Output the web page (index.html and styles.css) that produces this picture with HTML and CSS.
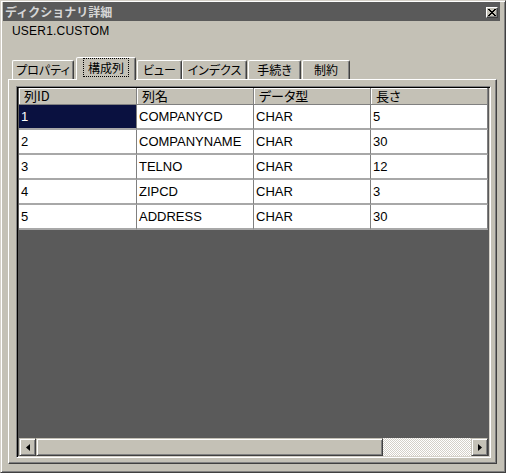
FILE: index.html
```html
<!DOCTYPE html>
<html lang="ja">
<head>
<meta charset="utf-8">
<link rel="stylesheet" href="styles.css">
</head>
<body>
<div class="window">
  <div class="titlebar">
    <span class="title">ディクショナリ詳細</span>
    <span class="close"><svg width="8" height="7" viewBox="0 0 8 7"><path d="M0 0h2v1h1v1h2V1h1V0h2v1H7v1H6v1H5v1h1v1h1v1h1v1H6V6H5V5H3v1H2v1H0V6h1V5h1V4h1V3H2V2H1V1H0z" fill="#000"/></svg></span>
  </div>
  <div class="body">
    <div class="objname">USER1.CUSTOM</div>
    <div class="tabs">
      <div class="tab">プロパティ</div>
      <div class="tab active"><span class="focus">構成列</span></div>
      <div class="tab">ビュー</div>
      <div class="tab">インデクス</div>
      <div class="tab">手続き</div>
      <div class="tab">制約</div>
    </div>
    <div class="panel">
      <div class="grid">
        <div class="rows">
          <div class="row head">
            <div class="cell">列ID</div>
            <div class="cell">列名</div>
            <div class="cell">データ型</div>
            <div class="cell">長さ</div>
          </div>
          <div class="row">
            <div class="cell sel">1</div>
            <div class="cell">COMPANYCD</div>
            <div class="cell">CHAR</div>
            <div class="cell">5</div>
          </div>
          <div class="row">
            <div class="cell">2</div>
            <div class="cell">COMPANYNAME</div>
            <div class="cell">CHAR</div>
            <div class="cell">30</div>
          </div>
          <div class="row">
            <div class="cell">3</div>
            <div class="cell">TELNO</div>
            <div class="cell">CHAR</div>
            <div class="cell">12</div>
          </div>
          <div class="row">
            <div class="cell">4</div>
            <div class="cell">ZIPCD</div>
            <div class="cell">CHAR</div>
            <div class="cell">3</div>
          </div>
          <div class="row">
            <div class="cell">5</div>
            <div class="cell">ADDRESS</div>
            <div class="cell">CHAR</div>
            <div class="cell">30</div>
          </div>
        </div>
        <div class="empty"></div>
        <div class="hscroll">
          <div class="arrow"><svg width="4" height="7" viewBox="0 0 4 7"><path d="M4 0v7L0 3.5z" fill="#000"/></svg></div>
          <div class="thumb"></div>
          <div class="track"></div>
          <div class="arrow"><svg width="4" height="7" viewBox="0 0 4 7"><path d="M0 0v7l4-3.5z" fill="#000"/></svg></div>
        </div>
      </div>
    </div>
  </div>
</div>
</body>
</html>
```
FILE: styles.css
```css
* { box-sizing: border-box; }
html, body { margin: 0; padding: 0; }
body {
  width: 506px;
  height: 473px;
  background: #c4c1b6;
  font-family: "Liberation Sans", "Noto Sans CJK JP", sans-serif;
  font-size: 12px;
  color: #000;
}
.window {
  width: 506px;
  height: 473px;
  border: 1px solid;
  border-color: #d4d0c8 #404040 #404040 #d4d0c8;
  box-shadow: inset 1px 1px 0 #fff, inset -1px -1px 0 #808080;
  padding: 1px 5px 2px 2px;
  display: flex;
  flex-direction: column;
  background: #c4c1b6;
}
.titlebar {
  height: 19px;
  background: #5a5a5a;
  display: flex;
  align-items: center;
  justify-content: space-between;
  padding: 1px 2px 0 2px;
  flex: none;
}
.title {
  color: #d6d6d6;
  font-family: "Noto Sans CJK JP", sans-serif;
  font-size: 12px;
  font-weight: bold;
  line-height: 14px;
}
.close {
  width: 12px;
  height: 11px;
  background: #c4c1b6;
  border: 1px solid;
  border-color: #fff #404040 #404040 #fff;
  box-shadow: inset -1px -1px 0 #808080;
  display: flex;
  align-items: center;
  justify-content: center;
}
.body {
  flex: 1;
  display: flex;
  flex-direction: column;
  padding: 2px 3px 6px 5px;
}
.objname {
  height: 16px;
  line-height: 16px;
  padding-left: 4px;
  font-size: 12px;
  letter-spacing: 0.2px;
}
.tabs {
  display: flex;
  margin-top: 18px;
  padding-left: 4px;
  height: 22px;
  align-items: flex-end;
  position: relative;
  z-index: 1;
}
.tab {
  height: 19px;
  border: 1px solid;
  border-bottom: none;
  border-color: #fff #404040 transparent #fff;
  box-shadow: inset -1px 0 0 #808080;
  border-radius: 2px 2px 0 0;
  font-family: "Noto Sans CJK JP", sans-serif;
  font-feature-settings: "palt";
  font-size: 12px;
  line-height: 17px;
  text-align: center;
  white-space: nowrap;
}
.tab:nth-child(1) { width: 62px; margin-right: 2px; }
.tab:nth-child(2) { width: 60px; margin-right: 1px; }
.tab:nth-child(3) { width: 45px; margin-right: 0; }
.tab:nth-child(4) { width: 65px; margin-right: 1px; }
.tab:nth-child(5) { width: 53px; margin-right: 1px; }
.tab:nth-child(6) { width: 48px; }
.tab.active {
  height: 23px;
  margin-bottom: -1px;
  background: #c4c1b6;
  line-height: 20px;
}
.focus {
  outline: 1px dotted #000;
  outline-offset: 0;
  padding: 0 4px;
}
.panel {
  flex: 1;
  border: 1px solid;
  border-color: #fff #404040 #404040 #fff;
  box-shadow: inset -1px -1px 0 #808080;
  padding: 6px 6px 5px 7px;
  display: flex;
}
.grid {
  flex: 1;
  border: 1px solid;
  border-color: #808080 #fff #fff #808080;
  box-shadow: inset 1px 1px 0 #000, inset -1px -1px 0 #d4d0c8;
  padding: 1px 2px 1px 2px;
  display: flex;
  flex-direction: column;
  background: #5a5a5a;
}
.rows { display: flex; flex-direction: column; flex: none; }
.row {
  display: grid;
  grid-template-columns: 118px 117px 117px 117px;
  height: 25px;
  background: #fff;
  font-size: 13px;
}
.row.head {
  height: 17px;
  background: #c4c1b6;
}
.cell {
  border-right: 1px solid #808080;
  border-bottom: 2px solid #a8a8a8;
  padding: 0 2px;
  line-height: 23px;
  white-space: nowrap;
  overflow: hidden;
}
.row.head .cell {
  border-right: 1px solid #808080;
  box-shadow: inset 1px 1px 0 #fff;
  border-bottom: 1px solid #808080;
  font-family: "Noto Sans CJK JP", sans-serif;
  font-feature-settings: "palt";
  line-height: 16px;
  overflow: visible;
  padding-left: 5px;
}
.cell.sel { background: #0a1140; color: #fff; }
.empty { flex: 1; }
.hscroll {
  height: 18px;
  display: flex;
  flex: none;
}
.arrow {
  width: 17px;
  height: 18px;
  background: #c4c1b6;
  border: 1px solid;
  border-color: #c4c1b6 #404040 #404040 #c4c1b6;
  box-shadow: inset 1px 1px 0 #fff, inset -1px -1px 0 #808080;
  display: flex;
  align-items: center;
  justify-content: center;
}
.thumb {
  width: 347px;
  background: #c4c1b6;
  border: 1px solid;
  border-color: #c4c1b6 #404040 #404040 #c4c1b6;
  box-shadow: inset 1px 1px 0 #fff, inset -1px -1px 0 #808080;
}
.track {
  flex: 1;
  background-color: #fff;
  background-image: repeating-conic-gradient(#d4d0c8 0 25%, #fff 0 50%);
  background-size: 2px 2px;
}
```
